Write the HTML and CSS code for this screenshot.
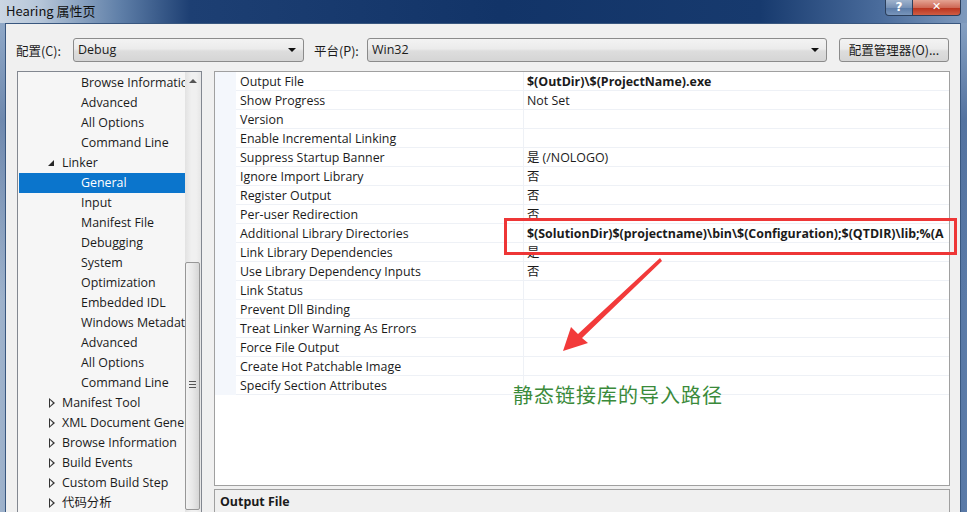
FILE: index.html
```html
<!DOCTYPE html>
<html lang="zh-CN">
<head>
<meta charset="utf-8">
<title>Hearing 属性页</title>
<link rel="stylesheet" href="styles.css">
</head>
<body>
<div class="window">
  <div class="titlebar">
    <span class="title">Hearing 属性页</span>
    <div class="caption-btns">
      <div class="cbtn help">?</div>
      <div class="cbtn close">✕</div>
    </div>
  </div>
  <div class="client">
    <div class="toolbar">
      <label class="lbl lbl-config">配置(C):</label>
      <div class="combo combo-config"><span>Debug</span><i class="drop"></i></div>
      <label class="lbl lbl-platform">平台(P):</label>
      <div class="combo combo-platform"><span>Win32</span><i class="drop"></i></div>
      <div class="btn">配置管理器(O)...</div>
    </div>
    <div class="main">
      <div class="tree">
        <div class="tree-items">
          <div class="ti l2">Browse Information</div>
          <div class="ti l2">Advanced</div>
          <div class="ti l2">All Options</div>
          <div class="ti l2">Command Line</div>
          <div class="ti l1"><i class="exp"></i>Linker</div>
          <div class="ti l2 sel">General</div>
          <div class="ti l2">Input</div>
          <div class="ti l2">Manifest File</div>
          <div class="ti l2">Debugging</div>
          <div class="ti l2">System</div>
          <div class="ti l2">Optimization</div>
          <div class="ti l2">Embedded IDL</div>
          <div class="ti l2">Windows Metadata</div>
          <div class="ti l2">Advanced</div>
          <div class="ti l2">All Options</div>
          <div class="ti l2">Command Line</div>
          <div class="ti l1"><i class="col"></i>Manifest Tool</div>
          <div class="ti l1"><i class="col"></i>XML Document Generator</div>
          <div class="ti l1"><i class="col"></i>Browse Information</div>
          <div class="ti l1"><i class="col"></i>Build Events</div>
          <div class="ti l1"><i class="col"></i>Custom Build Step</div>
          <div class="ti l1"><i class="col"></i>代码分析</div>
        </div>
        <div class="vscroll">
          <div class="arrow-up"></div>
          <div class="thumb"><span class="grip"></span></div>
        </div>
      </div>
      <div class="right">
        <div class="grid">
          <div class="rows">
            <div class="row"><div class="name">Output File</div><div class="value b">$(OutDir)\$(ProjectName).exe</div></div>
            <div class="row"><div class="name">Show Progress</div><div class="value">Not Set</div></div>
            <div class="row"><div class="name">Version</div><div class="value"></div></div>
            <div class="row"><div class="name">Enable Incremental Linking</div><div class="value"></div></div>
            <div class="row"><div class="name">Suppress Startup Banner</div><div class="value">是 (/NOLOGO)</div></div>
            <div class="row"><div class="name">Ignore Import Library</div><div class="value">否</div></div>
            <div class="row"><div class="name">Register Output</div><div class="value">否</div></div>
            <div class="row"><div class="name">Per-user Redirection</div><div class="value">否</div></div>
            <div class="row"><div class="name">Additional Library Directories</div><div class="value b">$(SolutionDir)$(projectname)\bin\$(Configuration);$(QTDIR)\lib;%(A</div></div>
            <div class="row"><div class="name">Link Library Dependencies</div><div class="value">是</div></div>
            <div class="row"><div class="name">Use Library Dependency Inputs</div><div class="value">否</div></div>
            <div class="row"><div class="name">Link Status</div><div class="value"></div></div>
            <div class="row"><div class="name">Prevent Dll Binding</div><div class="value"></div></div>
            <div class="row"><div class="name">Treat Linker Warning As Errors</div><div class="value"></div></div>
            <div class="row"><div class="name">Force File Output</div><div class="value"></div></div>
            <div class="row"><div class="name">Create Hot Patchable Image</div><div class="value"></div></div>
            <div class="row"><div class="name">Specify Section Attributes</div><div class="value"></div></div>
          </div>
        </div>
        <div class="desc">Output File</div>
      </div>
    </div>
  </div>
  <div class="annot-box"></div>
  <svg class="annot-arrow" width="967" height="512" viewBox="0 0 967 512">
    <polygon points="563,351 571,327 578,334 660,258 662,261 582,338 588,343" fill="#f23a3a"/>
  </svg>
  <div class="annot-text">静态链接库的导入路径</div>
</div>
</body>
</html>
```

FILE: styles.css
```css
* { box-sizing: border-box; }
html, body { margin: 0; padding: 0; }
body {
  width: 967px;
  height: 512px;
  overflow: hidden;
  font-family: "Open Sans", "Noto Sans CJK SC", sans-serif;
  font-size: 12.4px;
  color: #1b1b1b;
}
.window {
  position: relative;
  width: 967px;
  height: 512px;
  overflow: hidden;
  background:
    linear-gradient(180deg, rgba(150,175,205,0.9) 0px, rgba(80,110,155,0.6) 120px, rgba(20,50,100,0) 300px),
    linear-gradient(90deg, #9fb3cc 0px, #1f4278 160px, #133468 600px, #2a4f84 880px, #5b7ba8 967px);
}
.titlebar {
  height: 23px;
  display: flex;
  align-items: flex-start;
  justify-content: space-between;
  background: linear-gradient(90deg, #cbd6e3 0px, #b6c6d9 40px, #5f7fa8 120px, #1d3f73 190px, #123468 500px, #173a6e 760px, #4a6c9c 880px, #7f9abd 967px);
}
.title {
  padding: 3px 0 0 6px;
  font-size: 13px;
  color: #111;
  font-family: "Noto Sans CJK SC", "Open Sans", sans-serif;
  line-height: 16px;
}
.caption-btns {
  display: flex;
  margin-right: 6px;
}
.cbtn {
  height: 16px;
  border: 1px solid #2b3f5c;
  border-top: none;
  color: #fff;
  font-weight: bold;
  text-align: center;
  line-height: 14px;
  font-size: 12px;
  font-family: "DejaVu Sans", sans-serif;
}
.help {
  width: 28px;
  border-radius: 0 0 0 4px;
  background: linear-gradient(180deg, #9eb2cc 0%, #7892b6 50%, #5a7aa6 51%, #7895bb 100%);
}
.close {
  width: 48px;
  border-left: none;
  border-radius: 0 0 4px 0;
  background: linear-gradient(180deg, #e4a393 0%, #cf6a57 50%, #b9311c 51%, #cf5d44 100%);
  font-size: 11px;
}
.client {
  margin: 0 6px 0 5px;
  height: 489px;
  background: #f0f0f0;
  border-top: 1px solid #39577f;
  border-left: 1px solid #39577f;
  border-right: 1px solid #39577f;
}
.toolbar {
  display: flex;
  align-items: center;
  height: 24px;
  margin-top: 14px;
  padding-left: 10px;
  font-family: "Noto Sans CJK SC", "Open Sans", sans-serif;
  font-size: 12.5px;
}
.lbl { display: block; }
.lbl-config { width: 57px; }
.lbl-platform { width: 53px; margin-left: 10px; }
.combo {
  position: relative;
  height: 24px;
  border: 1px solid #8b8b8b;
  border-radius: 3px;
  background: linear-gradient(180deg, #f3f3f3 0%, #ebebeb 45%, #dddddd 55%, #d5d5d5 100%);
  padding-left: 4px;
  line-height: 22px;
  font-family: "Open Sans", sans-serif;
  font-size: 12.5px;
}
.combo-config { width: 231px; }
.combo-platform { width: 460px; }
.drop {
  position: absolute;
  right: 7px;
  top: 9px;
  width: 0;
  height: 0;
  border-left: 4px solid transparent;
  border-right: 4px solid transparent;
  border-top: 4px solid #111;
}
.btn {
  margin-left: 12px;
  width: 110px;
  height: 24px;
  border: 1px solid #8b8b8b;
  border-radius: 3px;
  background: linear-gradient(180deg, #f3f3f3 0%, #ebebeb 45%, #dddddd 55%, #d5d5d5 100%);
  text-align: center;
  line-height: 22px;
}
.main {
  display: flex;
  gap: 12px;
  margin-top: 9px;
  padding-left: 11px;
}
.tree {
  position: relative;
  width: 185px;
  height: 460px;
  border: 1px solid #828790;
  background: #f6f6f6;
  display: flex;
}
.tree-items {
  flex: 1;
  padding-top: 1px;
  overflow: hidden;
  white-space: nowrap;
}
.ti {
  height: 20px;
  line-height: 19px;
  margin-left: 1px;
  position: relative;
}
.l2 { padding-left: 62px; }
.l1 { padding-left: 43px; }
.sel { background: #0b75cc; color: #fff; }
.exp {
  position: absolute;
  left: 29px;
  top: 7px;
  width: 0;
  height: 0;
  border-left: 6px solid transparent;
  border-bottom: 6px solid #262626;
}
.col {
  position: absolute;
  left: 30px;
  top: 5px;
  width: 0;
  height: 0;
  border-top: 5px solid transparent;
  border-bottom: 5px solid transparent;
  border-left: 6px solid #333;
}
.col::after {
  content: "";
  position: absolute;
  left: -5px;
  top: -3px;
  border-top: 3px solid transparent;
  border-bottom: 3px solid transparent;
  border-left: 3.5px solid #f6f6f6;
}
.vscroll {
  position: relative;
  width: 16px;
  background: linear-gradient(90deg, #e2e2e2 0%, #f0f0f0 40%, #f0f0f0 70%, #e6e6e6 100%);
}
.arrow-up {
  position: absolute;
  left: 4px;
  top: 7px;
  border-left: 4px solid transparent;
  border-right: 4px solid transparent;
  border-bottom: 4px solid #555;
}
.thumb {
  position: absolute;
  left: 0;
  top: 190px;
  width: 15px;
  height: 248px;
  border: 1px solid #979797;
  border-radius: 2px;
  background: linear-gradient(90deg, #f3f3f3 0%, #e8e8e8 50%, #d6d6d6 100%);
}
.grip {
  position: absolute;
  left: 3px;
  top: 118px;
  width: 7px;
  height: 7px;
  border-top: 1px solid #555;
  border-bottom: 1px solid #555;
}
.grip::after {
  content: "";
  position: absolute;
  left: 0;
  right: 0;
  top: 2px;
  height: 1px;
  background: #555;
}
.right {
  width: 736px;
  display: flex;
  flex-direction: column;
}
.grid {
  height: 415px;
  border: 1px solid #a0a0a0;
  background: #fff;
}
.rows {
  border-left: 21px solid #f4f7fc;
}
.row {
  display: flex;
  height: 19px;
  border-bottom: 1px solid #eef1f6;
  line-height: 19px;
  white-space: nowrap;
}
.name {
  width: 288px;
  padding-left: 4px;
  border-right: 1px solid #eef1f6;
}
.value {
  flex: 1;
  padding-left: 3px;
  overflow: hidden;
}
.b { font-weight: bold; }
.desc {
  margin-top: 3px;
  height: 40px;
  border: 1px solid #a0a0a0;
  background: #f0f0f0;
  font-weight: bold;
  padding: 3px 0 0 5px;
  line-height: 17px;
}
.annot-box {
  position: absolute;
  left: 504px;
  top: 218px;
  width: 453px;
  height: 37px;
  border: 3px solid #ee3636;
}
.annot-arrow {
  position: absolute;
  left: 0;
  top: 0;
}
.annot-text {
  position: absolute;
  left: 513px;
  top: 381px;
  font-family: "Noto Sans CJK SC", sans-serif;
  font-size: 20px;
  line-height: 28px;
  color: #3a8a3a;
  letter-spacing: 1px;
}
```
